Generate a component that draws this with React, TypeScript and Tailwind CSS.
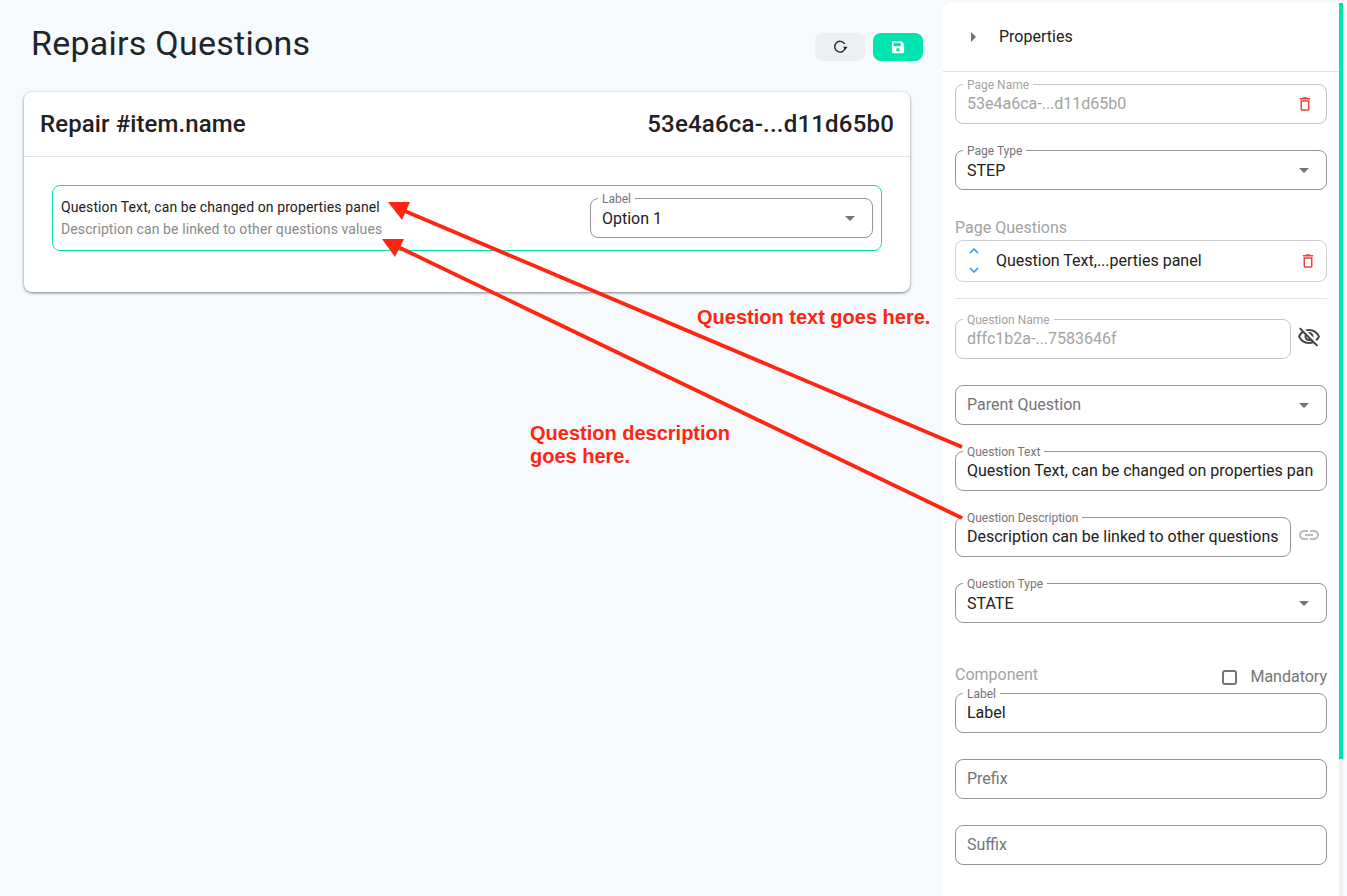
import React from "react";
import { FaSave } from "react-icons/fa";

const P = {
  drop: "M7 10l5 5 5-5z",
  right: "M10 17l5-5-5-5v10z",
  del: "M6 19c0 1.1.9 2 2 2h8c1.1 0 2-.9 2-2V7H6v12zM8 9h8v10H8V9zm7.5-5l-1-1h-5l-1 1H5v2h14V4z",
  link: "M3.9 12c0-1.71 1.39-3.1 3.1-3.1h4V7H7c-2.76 0-5 2.24-5 5s2.24 5 5 5h4v-1.9H7c-1.71 0-3.1-1.39-3.1-3.1zM8 13h8v-2H8v2zm9-6h-4v1.9h4c1.71 0 3.1 1.39 3.1 3.1s-1.39 3.1-3.1 3.1h-4V17h4c2.76 0 5-2.24 5-5s-2.24-5-5-5z",
  eye: "M12 6c3.79 0 7.17 2.13 8.82 5.5-.59 1.22-1.42 2.27-2.41 3.12l1.41 1.41c1.39-1.23 2.49-2.77 3.18-4.53C21.27 7.11 17 4 12 4c-1.27 0-2.49.2-3.64.57l1.65 1.65C10.66 6.09 11.32 6 12 6zm-1.07 1.14L13 9.21c.57.25 1.03.71 1.28 1.28l2.07 2.07c.08-.34.14-.7.14-1.07C16.5 9.01 14.48 7 12 7c-.37 0-.72.05-1.07.14zM2.01 3.87l2.68 2.68C3.06 7.83 1.77 9.53 1 11.5 2.73 15.89 7 19 12 19c1.52 0 2.98-.29 4.32-.82l3.42 3.42 1.41-1.41L3.42 2.45 2.01 3.87zm7.5 7.5l2.61 2.61c-.04.01-.08.02-.12.02-1.38 0-2.5-1.12-2.5-2.5 0-.05.01-.08.01-.13zm-3.4-3.4l1.75 1.75c-.23.55-.36 1.15-.36 1.77 0 2.48 2.02 4.5 4.5 4.5.62 0 1.22-.13 1.76-.36l.98.98c-.88.24-1.8.38-2.74.38-3.79 0-7.17-2.13-8.82-5.5.7-1.43 1.72-2.61 2.93-3.52z",
  up: "M7.41 15.41 12 10.83l4.59 4.58L18 14l-6-6-6 6z",
  down: "M7.41 8.59 12 13.17l4.59-4.58L18 10l-6 6-6-6z",
};

function Icon({ d, className }: { d: string; className: string }) {
  return (
    <svg viewBox="0 0 24 24" fill="currentColor" className={className}>
      <path d={d} />
    </svg>
  );
}

type FieldProps = {
  label?: string;
  value?: string;
  placeholder?: string;
  disabled?: boolean;
  select?: boolean;
  trailing?: React.ReactNode;
  className?: string;
};

function Field({ label, value, placeholder, disabled, select, trailing, className = "" }: FieldProps) {
  return (
    <div
      className={`relative h-10 rounded-lg border flex items-center pl-[11px] pr-3 bg-white ${
        disabled ? "border-[#c4c4c4]" : "border-[#949494]"
      } ${className}`}
    >
      {label && (
        <span
          className={`absolute left-[7px] top-[-6px] bg-white px-1 text-[12px] leading-[12px] ${
            disabled ? "text-[#a3a3a3]" : "text-[#757575]"
          }`}
        >
          {label}
        </span>
      )}
      <span
        className={`flex-1 min-w-0 overflow-hidden whitespace-nowrap text-[16px] leading-5 ${
          select && value ? "pt-[2px]" : ""
        } ${disabled ? "text-[#a3a3a3]" : placeholder ? "text-[#757575]" : "text-[#212121]"}`}
      >
        {value ?? placeholder}
      </span>
      {select && <Icon d={P.drop} className="w-6 h-6 text-[#757575] -mr-[2px] shrink-0" />}
      {trailing}
    </div>
  );
}

function ReloadGlyph() {
  return (
    <svg viewBox="0 0 14 14" className="w-[15px] h-[15px]" fill="none">
      <path d="M10.9 3.7A5 5 0 1 0 11.5 7.2" stroke="currentColor" strokeWidth="1.3" />
      <polygon points="9.4,6.3 13.6,6.3 11.5,9" fill="currentColor" />
    </svg>
  );
}

export default function App() {
  return (
    <div
      className="relative flex h-[896px] w-[1347px] overflow-hidden bg-[#f7fafc] text-[#212121]"
      style={{ fontFamily: "Roboto, sans-serif" }}
    >
      {/* main */}
      <main className="w-[943px] shrink-0 pl-[24px] pr-[33px]">
        <div className="flex items-start justify-between h-[92px]">
          <h1 className="ml-[7px] mt-[21px] text-[34px] leading-[44px] tracking-[0.25px] text-[#212529]">
            Repairs Questions
          </h1>
          <div className="flex gap-2 mt-[33px] mr-[-13px]">
            <button className="w-[50px] h-7 rounded-lg bg-[#edeff2] flex items-center justify-center text-[#212121]">
              <ReloadGlyph />
            </button>
            <button className="w-[50px] h-7 rounded-lg bg-[#00e4b0] flex items-center justify-center text-white">
              <FaSave className="w-[14px] h-[14px]" />
            </button>
          </div>
        </div>

        <section className="h-[200px] rounded-lg bg-white shadow-[0_1px_3px_rgba(0,0,0,0.5)]">
          <div className="h-[65px] border-b border-[#e2e2e2] flex items-center justify-between px-4 text-[24px] font-medium text-[#212121]">
            <span className="tracking-[0.1px]">Repair #item.name</span>
            <span className="tracking-[0.2px]">53e4a6ca-...d11d65b0</span>
          </div>
          <div className="px-[28px] pt-[28px]">
            <div className="h-[66px] rounded-lg border border-[#00e4b0] flex items-center justify-between pl-2 pr-2">
              <div className="text-[14px] leading-[22px] tracking-[0.1px] -mt-[1px]">
                <div className="text-[#212121]">Question Text, can be changed on properties panel</div>
                <div className="text-[#8a8a8a]">Description can be linked to other questions values</div>
              </div>
              <Field label="Label" value="Option 1" select className="w-[283px]" />
            </div>
          </div>
        </section>
      </main>

      {/* properties panel */}
      <aside className="mt-[3px] w-[400px] shrink-0 flex bg-white rounded-tl-lg">
        <div className="w-[396px] shrink-0">
          <div className="h-[69px] border-b border-[#e2e2e2] flex items-center">
            <Icon d={P.right} className="w-6 h-6 text-[#757575] ml-[18px]" />
            <span className="ml-[14px] text-[16px] -mt-[1px]">Properties</span>
          </div>
          <div className="px-3 pt-3">
            <Field
              label="Page Name"
              value="53e4a6ca-...d11d65b0"
              disabled
              trailing={<Icon d={P.del} className="w-[18px] h-[18px] text-[#f44336] shrink-0" />}
            />
            <Field label="Page Type" value="STEP" select className="mt-[26px]" />
            <div className="mt-[26px] h-6 text-[16px] leading-[23px] text-[#a3a3a3]">Page Questions</div>
            <div className="h-[42px] rounded-lg border border-[#cfcfcf] flex items-center pl-[9px] pr-[9px]">
              <div className="flex flex-col w-[18px] shrink-0 text-[#2196f3]">
                <Icon d={P.up} className="w-[18px] h-[18px] -my-[1px]" />
                <Icon d={P.down} className="w-[18px] h-[18px] mt-[2px]" />
              </div>
              <span className="ml-[13px] flex-1 text-[16px] text-[#212121]">Question Text,...perties panel</span>
              <Icon d={P.del} className="w-[18px] h-[18px] text-[#f44336] shrink-0" />
            </div>
            <div className="mt-4 h-px bg-[#e2e2e2]" />
            <div className="mt-5 flex items-center">
              <Field label="Question Name" value="dffc1b2a-...7583646f" disabled className="w-[336px]" />
              <Icon d={P.eye} className="ml-[6px] w-6 h-6 text-[#424242] -mt-[4px]" />
            </div>
            <Field placeholder="Parent Question" select className="mt-[26px]" />
            <Field
              label="Question Text"
              value="Question Text, can be changed on properties panel"
              className="mt-[26px]"
            />
            <div className="mt-[26px] flex items-center">
              <Field
                label="Question Description"
                value="Description can be linked to other questions values"
                className="w-[336px]"
              />
              <Icon d={P.link} className="ml-[6px] w-6 h-6 text-[#bdbdbd] -mt-[4px]" />
            </div>
            <Field label="Question Type" value="STATE" select className="mt-[26px]" />
            <div className="mt-[40px] h-[30px] flex items-start justify-between">
              <span className="text-[16px] leading-6 text-[#a3a3a3]">Component</span>
              <span className="flex items-center mt-[2px]">
                <span className="w-[15px] h-[15px] rounded-[3px] border-2 border-[#757575]" />
                <span className="ml-[13px] text-[16px] leading-6 text-[#757575]">Mandatory</span>
              </span>
            </div>
            <Field label="Label" value="Label" />
            <Field placeholder="Prefix" className="mt-[26px]" />
            <Field placeholder="Suffix" className="mt-[26px]" />
          </div>
        </div>
        <div className="w-1 bg-[#eef0f2]">
          <div className="h-[756px] bg-[#00e4b0]" />
        </div>
      </aside>

      {/* annotation overlay */}
      <svg className="absolute inset-0 pointer-events-none" width="1347" height="896">
        <line x1="962" y1="447" x2="400" y2="209" stroke="#ff2511" strokeWidth="3.8" />
        <polygon points="388,202 410,202 402,220" fill="#ff2511" />
        <line x1="962" y1="518" x2="394" y2="245" stroke="#ff2511" strokeWidth="3.8" />
        <polygon points="382,239 404,239 395,257" fill="#ff2511" />
      </svg>
      <div
        className="absolute left-[697px] top-[306px] text-[20px] leading-[23px] font-bold text-[#ff2511] whitespace-nowrap"
        style={{ fontFamily: '"Liberation Sans", sans-serif' }}
      >
        Question text goes here.
      </div>
      <div
        className="absolute left-[530px] top-[422px] text-[20px] leading-[23px] font-bold text-[#ff2511] whitespace-nowrap"
        style={{ fontFamily: '"Liberation Sans", sans-serif' }}
      >
        Question description
        <br />
        goes here.
      </div>
    </div>
  );
}
